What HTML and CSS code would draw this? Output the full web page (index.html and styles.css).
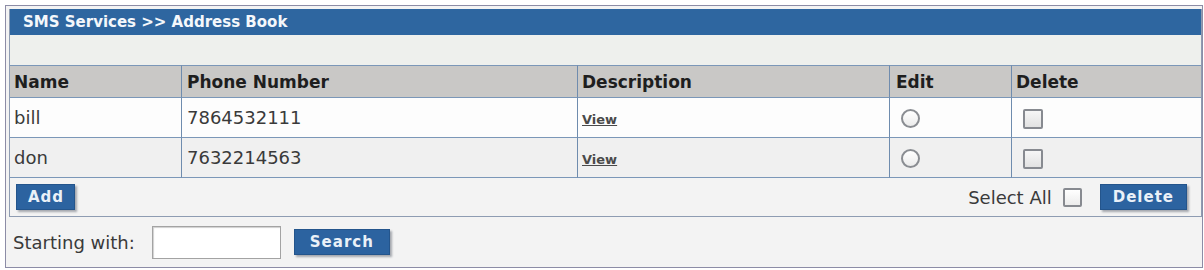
FILE: index.html
```html
<!DOCTYPE html>
<html>
<head>
<meta charset="utf-8">
<link rel="stylesheet" href="styles.css">
</head>
<body>
<div class="frame">
  <div class="panel">
    <div class="titlebar">SMS Services &gt;&gt; Address Book</div>
    <div class="strip"></div>
    <table class="book">
      <colgroup>
        <col class="c-name"><col class="c-phone"><col class="c-desc"><col class="c-edit"><col class="c-del">
      </colgroup>
      <thead>
        <tr><th>Name</th><th>Phone Number</th><th>Description</th><th>Edit</th><th>Delete</th></tr>
      </thead>
      <tbody>
        <tr class="odd">
          <td>bill</td><td class="num">7864532111</td><td><a class="view" href="#">View</a></td>
          <td class="ctl"><span class="radio"></span></td><td class="ctl"><span class="check"></span></td>
        </tr>
        <tr class="even">
          <td>don</td><td class="num">7632214563</td><td><a class="view" href="#">View</a></td>
          <td class="ctl"><span class="radio"></span></td><td class="ctl"><span class="check"></span></td>
        </tr>
      </tbody>
    </table>
    <div class="actions">
      <span class="btn">Add</span>
      <div class="right">
        <span class="selall">Select All</span>
        <span class="check small"></span>
        <span class="btn">Delete</span>
      </div>
    </div>
  </div>
  <div class="search">
    <span class="label">Starting with:</span>
    <span class="input"></span>
    <span class="btn">Search</span>
  </div>
</div>
</body>
</html>
```

FILE: styles.css
```css
html, body {
  margin: 0;
  padding: 0;
  background: #ffffff;
}
body {
  font-family: "DejaVu Sans", Verdana, sans-serif;
  color: #333;
}
.frame {
  box-sizing: border-box;
  width: 1198px;
  height: 263px;
  margin: 5px 0 0 5px;
  border: 1px solid #8c8ca6;
  background: #f3f3f3;
  padding: 3px 0 0 3px;
}
.panel {
  border-left: 1px solid #8e9cb2;
  border-right: 1px solid #8e9cb2;
  border-bottom: 1px solid #8e9cb2;
}
.titlebar {
  height: 26px;
  background: #2e66a0;
  color: #f4f7fb;
  font-weight: bold;
  font-size: 15px;
  line-height: 26px;
  padding-left: 13px;
}
.strip {
  height: 30px;
  background: #eef0ed;
}
.book {
  border-collapse: separate;
  border-spacing: 0;
  table-layout: fixed;
  width: 1191px;
}
.c-name { width: 172px; }
.c-phone { width: 396px; }
.c-desc { width: 312px; }
.c-edit { width: 122px; }
.c-del { width: 189px; }
.book th, .book td {
  border-right: 1px solid #6f8cae;
  border-bottom: 1px solid #7b97b8;
  text-align: left;
  padding: 0 4px;
  white-space: nowrap;
}
.book th:last-child, .book td:last-child {
  border-right: none;
}
.book th {
  background: #c9c8c6;
  border-top: 1px solid #7b97b8;
  height: 31px;
  font-size: 17px;
  font-weight: bold;
  color: #1e1e1e;
  padding-left: 4px;
}
.book th:nth-child(2) { padding-left: 5px; }
.book th:nth-child(4) { padding-left: 6px; }
.book td {
  height: 39px;
  font-size: 18px;
  color: #3a3a3a;
}
.book td.num { padding-left: 5px; }
.odd td { background: #fdfdfd; }
.even td { background: #f0f0f0; }
.view {
  color: #4a4a4a;
  font-size: 13px;
  font-weight: bold;
  text-decoration: underline;
}
.book td.ctl {
  padding-left: 11px;
  vertical-align: middle;
}
.radio {
  display: inline-block;
  box-sizing: border-box;
  width: 19px;
  height: 19px;
  border: 2px solid #8a8d92;
  border-radius: 50%;
  background: linear-gradient(#ffffff, #ececec);
  vertical-align: middle;
}
.check {
  display: inline-block;
  box-sizing: border-box;
  width: 20px;
  height: 20px;
  border: 2px solid #878a90;
  border-radius: 2px;
  background: linear-gradient(#f6f6f6, #e2e2e2);
  vertical-align: middle;
}
.check.small {
  width: 19px;
  height: 19px;
  margin-right: 18px;
  background: linear-gradient(#ffffff, #ececec);
}
.actions {
  height: 38px;
  display: flex;
  align-items: center;
  justify-content: space-between;
  padding: 0 14px 0 6px;
  background: #f3f3f3;
}
.right {
  display: flex;
  align-items: center;
}
.selall {
  font-size: 18px;
  color: #3a3a3a;
  margin-right: 11px;
}
.btn {
  display: inline-block;
  background: #2c63a0;
  color: #eaf1f8;
  font-weight: bold;
  font-size: 15px;
  letter-spacing: 1px;
  line-height: 24px;
  height: 24px;
  padding: 0 12px;
  border: 1px solid #24558c;
  box-shadow: 2px 2px 2px #a4a8ae;
}
.actions .btn:first-child {
  padding: 0 10px 0 11px;
}
.search {
  height: 50px;
  display: flex;
  align-items: center;
  padding-left: 4px;
}
.label {
  font-size: 18px;
  color: #3a3a3a;
}
.input {
  box-sizing: border-box;
  width: 129px;
  height: 33px;
  margin-left: 17px;
  background: #ffffff;
  border: 1px solid #a3a3a3;
  box-shadow: inset 1px 1px 1px #d0d0d0;
}
.search .btn {
  margin-left: 13px;
  padding: 0 15px;
}
```
